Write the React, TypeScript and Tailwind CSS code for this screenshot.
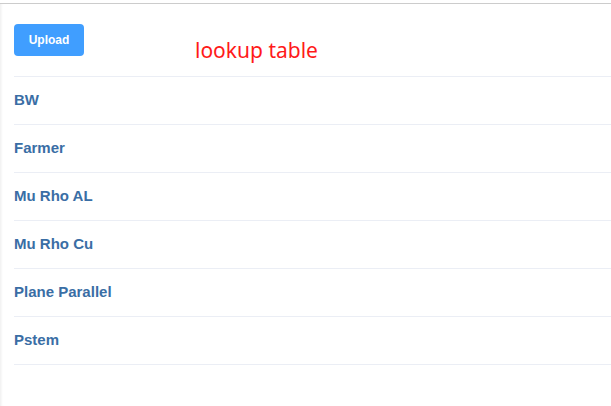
const tables = ["BW", "Farmer", "Mu Rho AL", "Mu Rho Cu", "Plane Parallel", "Pstem"];

export default function App() {
  return (
    <div className="h-[406px] w-[611px] overflow-hidden bg-white pt-[3px]">
      <div className="h-full border-t border-[#cccccc] shadow-[inset_3px_0_3px_-2px_rgba(0,0,0,0.08)] pl-[14px] pt-5">
        <div className="flex h-8 items-start">
          <button
            type="button"
            className="h-8 w-[70px] rounded-[4px] bg-[#409eff] text-[12px] font-bold text-white"
            style={{ fontFamily: "'Liberation Sans', Arial, sans-serif" }}
          >
            Upload
          </button>
          <span
            className="ml-[111px] mt-[12px] text-[21px] leading-[28px] text-[#ff1a1a]"
            style={{ fontFamily: "'Noto Sans', sans-serif" }}
          >
            lookup table
          </span>
        </div>
        <ul className="mt-5 border-t border-[#ebeef5]">
          {tables.map((name) => (
            <li
              key={name}
              className="flex h-12 items-center border-b border-[#ebeef5] text-[15px] font-bold text-[#3a6ea5]"
              style={{ fontFamily: "'Liberation Sans', Arial, sans-serif" }}
            >
              {name}
            </li>
          ))}
        </ul>
      </div>
    </div>
  );
}
